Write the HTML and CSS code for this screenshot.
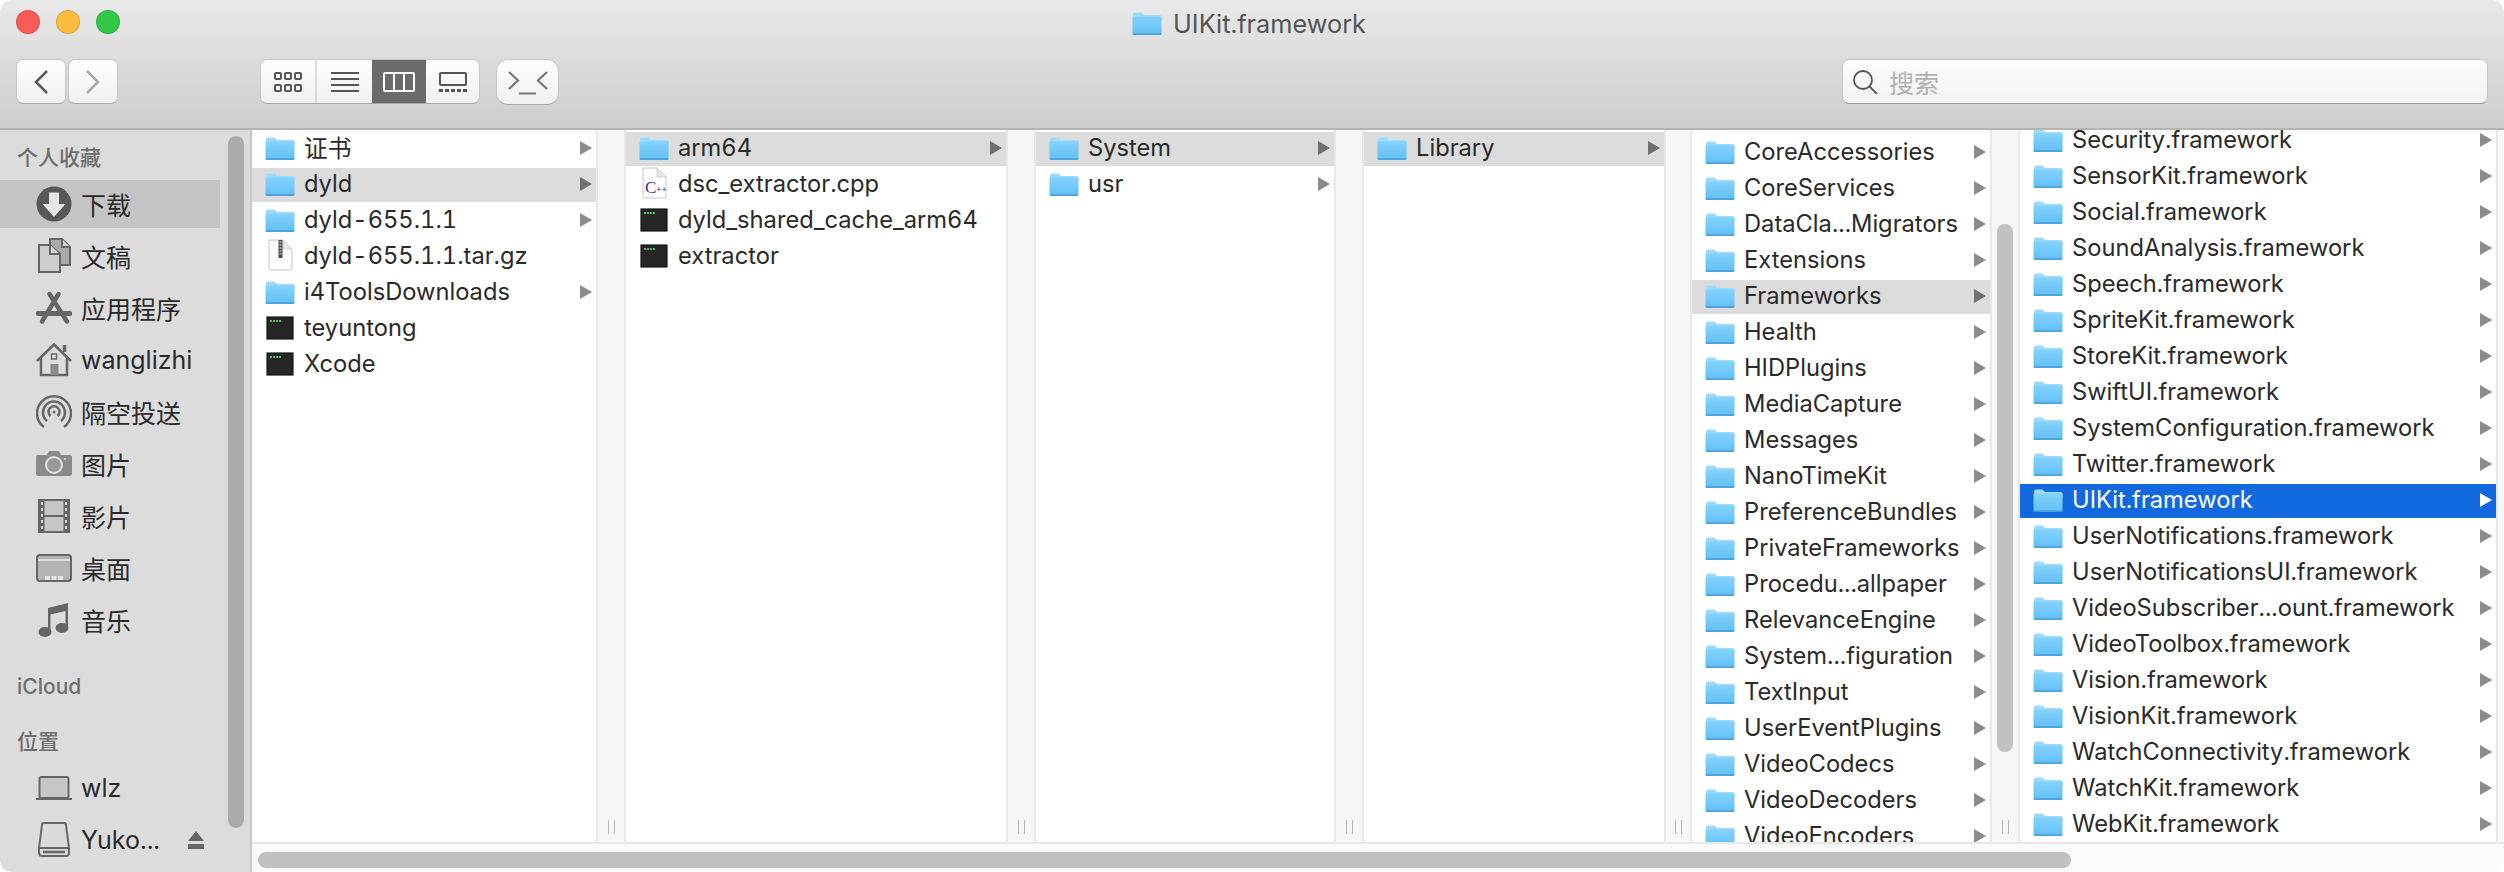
FILE: index.html
```html
<!DOCTYPE html>
<html lang="zh">
<head>
    <meta charset="UTF-8">
    <title>UIKit.framework</title>
    <link rel="stylesheet" href="styles.css">
</head>
<body>
    <svg class="defs" width="0" height="0">
        <defs>
            <linearGradient id="folderFill" x1="0" y1="0" x2="0" y2="1">
                <stop offset="0" stop-color="#84d3fc"/>
                <stop offset="1" stop-color="#61bff6"/>
            </linearGradient>
            <symbol id="folder" viewBox="0 0 30 24">
                <path d="M1 3.5a2 2 0 0 1 2-2h6.5l2.5 2.5h15.500a2 2 0 0 1 2 2V10H1z" fill="#9adbfc"/>
                <path d="M0.500 6.500a1 1 0 0 1 1-1H28.500a1 1 0 0 1 1 1V22a1.500 1.500 0 0 1-1.500 1.500H2A1.500 1.500 0 0 1 0.500 22z" fill="url(#folderFill)"/>
                <path d="M0.500 22.200h29V22.500a1.500 1.500 0 0 1-1.500 1.500H2a1.500 1.500 0 0 1-1.500-1.500z" fill="#4aa3d6"/>
            </symbol>
            <symbol id="exec" viewBox="0 0 30 26">
                <rect x="1" y="1" width="28" height="24" rx="1" fill="#d7e6ef"/>
                <rect x="2" y="2" width="26" height="22" fill="#262626" stroke="#0d0d0d"/>
                <rect x="5" y="5" width="2" height="2" fill="#4fc04f"/>
                <rect x="8" y="5" width="2" height="2" fill="#4fc04f"/>
                <rect x="11" y="5" width="2" height="2" fill="#4fc04f"/>
                <rect x="14" y="5" width="2" height="2" fill="#4fc04f"/>
            </symbol>
            <symbol id="zipdoc" viewBox="0 0 30 34">
                <path d="M4 1H18L27 10V30a1 1 0 0 1-1 1H5a1 1 0 0 1-1-1z" fill="#fdfdfd" stroke="#c4c4c4"/>
                <path d="M18 1V10H27z" fill="#e8e8e8" stroke="#d0d0d0"/>
                <rect x="13.500" y="1" width="4" height="18" fill="#4a4a4a"/>
                <path d="M14.500 3h2M14.500 6h2M14.500 9h2M14.500 12h2M14.500 15h2" stroke="#eee"/>
            </symbol>
            <symbol id="cppdoc" viewBox="0 0 30 34">
                <path d="M4 1H18L27 10V30a1 1 0 0 1-1 1H5a1 1 0 0 1-1-1z" fill="#fdfdfd" stroke="#c4c4c4"/>
                <path d="M18 1V10H27z" fill="#e8e8e8" stroke="#d0d0d0"/>
            </symbol>
        </defs>
    </svg>

    <div class="window">
        <header class="toolbar">
            <div class="titlebar">
                <div class="lights">
                    <span class="light red"></span>
                    <span class="light yellow"></span>
                    <span class="light green"></span>
                </div>
                <div class="title">
                    <svg class="row-icon"><use href="#folder"/></svg>
                    <span>UIKit.framework</span>
                </div>
            </div>
            <div class="tools">
                <div class="nav">
                    <div class="btn nav-btn">
                        <svg width="14" height="24" viewBox="0 0 14 24"><path d="M13 1L2 12L13 23" fill="none" stroke="#5a5a5a" stroke-width="2.500"/></svg>
                    </div>
                    <div class="btn nav-btn">
                        <svg width="14" height="24" viewBox="0 0 14 24"><path d="M1 1L12 12L1 23" fill="none" stroke="#aaaaaa" stroke-width="2.500"/></svg>
                    </div>
                </div>
                <div class="btn views">
                    <div class="view view-first">
                        <svg width="28" height="20" viewBox="0 0 28 20" fill="none" stroke="#555" stroke-width="2">
                            <rect x="1" y="1" width="6" height="6" rx="1"/><rect x="11" y="1" width="6" height="6" rx="1"/><rect x="21" y="1" width="6" height="6" rx="1"/>
                            <rect x="1" y="13" width="6" height="6" rx="1"/><rect x="11" y="13" width="6" height="6" rx="1"/><rect x="21" y="13" width="6" height="6" rx="1"/>
                        </svg>
                    </div>
                    <div class="view view-list">
                        <svg width="28" height="20" viewBox="0 0 28 20" stroke="#555" stroke-width="2">
                            <path d="M0 1H28M0 7H28M0 13H28M0 19H28"/>
                        </svg>
                    </div>
                    <div class="view view-active">
                        <svg width="32" height="20" viewBox="0 0 32 20" fill="none" stroke="#fff" stroke-width="2">
                            <rect x="1" y="1" width="30" height="18" rx="1"/><path d="M11 1V19M21 1V19"/>
                        </svg>
                    </div>
                    <div class="view view-last">
                        <svg width="28" height="20" viewBox="0 0 28 20" fill="none" stroke="#555" stroke-width="2">
                            <rect x="1" y="1" width="26" height="12" rx="1"/>
                            <path d="M0 18.500H4M6 18.500H10M12 18.500H16M18 18.500H22M24 18.500H28" stroke-width="3"/>
                        </svg>
                    </div>
                </div>
                <div class="btn action">
                    <svg width="40" height="24" viewBox="0 0 40 24" fill="none" stroke="#777" stroke-width="2.200">
                        <path d="M1 1L10 9.500L1 18M39 1L30 9.500L39 18"/>
                        <path d="M11 22.500H28" stroke-width="2"/>
                    </svg>
                </div>
                <div class="search">
                    <svg width="25" height="24" viewBox="0 0 25 24" fill="none" stroke="#555" stroke-width="1.800">
                        <circle cx="10" cy="10" r="9"/><path d="M16.500 16.500L24 24"/>
                    </svg>
                    <span>搜索</span>
                </div>
            </div>
        </header>

        <div class="main">
            <aside class="sidebar">
                <div class="side-head head-top">个人收藏</div>
                <div class="side-item side-selected">
                    <svg class="side-icon" viewBox="0 0 36 36">
                        <circle cx="18" cy="18" r="17.500" fill="#585858"/>
                        <path d="M18 31L6.500 18H13V6.500H23V18H29.500z" fill="#e6e6e6"/>
                    </svg>
                    <span>下载</span>
                </div>
                <div class="side-item">
                    <svg class="side-icon" viewBox="0 0 36 36" stroke="#666" stroke-width="2">
                        <path d="M14 1H26L34 9V27H14z" fill="#a9a9a9"/>
                        <path d="M26 1V9H34" fill="#cfcfcf"/>
                        <path d="M3 7H14L24 16V34H3z" fill="#cdcdcd"/>
                        <path d="M14 7V16H24" fill="#dcdcdc"/>
                    </svg>
                    <span>文稿</span>
                </div>
                <div class="side-item">
                    <svg class="side-icon" viewBox="0 0 36 36" fill="none" stroke="#666" stroke-linecap="round">
                        <path d="M13.500 4L31 31.500M22.500 4L6 31.500" stroke-width="4.500"/>
                        <path d="M2 23.500H34" stroke-width="5"/>
                    </svg>
                    <span>应用程序</span>
                </div>
                <div class="side-item">
                    <svg class="side-icon" viewBox="0 0 36 36" fill="none" stroke="#666" stroke-width="2.500">
                        <path d="M1 19L18 2.500L35 19"/>
                        <path d="M5 15V33H31V15"/>
                        <path d="M28.500 10V3" stroke-width="3.500"/>
                        <rect x="15.500" y="12" width="5" height="5" stroke-width="1.500"/>
                        <rect x="14.500" y="22" width="8" height="11" fill="#8a8a8a" stroke="none"/>
                    </svg>
                    <span>wanglizhi</span>
                </div>
                <div class="side-item">
                    <svg class="side-icon" viewBox="0 0 36 36" fill="none" stroke="#666" stroke-width="2.500">
                        <path d="M8 33A17 17 0 1 1 28 33"/>
                        <path d="M11 27A11 11 0 1 1 25 27"/>
                        <path d="M14.500 22A5.500 5.500 0 1 1 21.500 22"/>
                        <circle cx="18" cy="18" r="1.500" fill="#666" stroke="none"/>
                    </svg>
                    <span>隔空投送</span>
                </div>
                <div class="side-item">
                    <svg class="side-icon" viewBox="0 0 36 36">
                        <path d="M2 9H11L13 5H23L25 9H34a2 2 0 0 1 2 2V28a2 2 0 0 1-2 2H2a2 2 0 0 1-2-2V11a2 2 0 0 1 2-2z" fill="#8a8a8a"/>
                        <circle cx="18" cy="19" r="8" fill="#999" stroke="#e2e2e2" stroke-width="2"/>
                        <circle cx="29" cy="13" r="1" fill="#ddd"/>
                    </svg>
                    <span>图片</span>
                </div>
                <div class="side-item">
                    <svg class="side-icon" viewBox="0 0 36 36">
                        <rect x="3" y="2" width="30" height="32" fill="#c6c6c6" stroke="#666" stroke-width="2"/>
                        <path d="M6 2V34M30 2V34" stroke="#666" stroke-width="5"/>
                        <path d="M6 4V34M30 4V34" stroke="#ddd" stroke-width="2" stroke-dasharray="3 3"/>
                        <path d="M8 18H28" stroke="#666" stroke-width="2"/>
                    </svg>
                    <span>影片</span>
                </div>
                <div class="side-item">
                    <svg class="side-icon" viewBox="0 0 36 36">
                        <rect x="1" y="5" width="34" height="26" rx="3" fill="#b4b4b4" stroke="#666" stroke-width="2"/>
                        <path d="M2 10H34" stroke="#ddd" stroke-width="2"/>
                        <rect x="9" y="26" width="5" height="4" fill="#e2e2e2"/>
                        <rect x="15.500" y="26" width="5" height="4" fill="#e2e2e2"/>
                        <rect x="22" y="26" width="5" height="4" fill="#e2e2e2"/>
                    </svg>
                    <span>桌面</span>
                </div>
                <div class="side-item">
                    <svg class="side-icon" viewBox="0 0 36 36" fill="#666">
                        <ellipse cx="9" cy="30" rx="6.500" ry="5"/>
                        <ellipse cx="26" cy="26" rx="6.500" ry="5"/>
                        <path d="M12 30V6L32 1V26H29.500V9L14.500 12.500V30z"/>
                    </svg>
                    <span>音乐</span>
                </div>
                <div class="side-head head-icloud">iCloud</div>
                <div class="side-head head-places">位置</div>
                <div class="side-item">
                    <svg class="side-icon" viewBox="0 0 36 36">
                        <rect x="3.500" y="7" width="29" height="21" rx="1.500" fill="#c6c6c6" stroke="#666" stroke-width="2"/>
                        <path d="M0 29H36" stroke="#666" stroke-width="2"/>
                    </svg>
                    <span>wlz</span>
                </div>
                <div class="side-item">
                    <svg class="side-icon" viewBox="0 0 36 36" fill="none" stroke="#666" stroke-width="2">
                        <path d="M6 3a2 2 0 0 1 2-2H28a2 2 0 0 1 2 2L33 26V31a3 3 0 0 1-3 3H6a3 3 0 0 1-3-3V26z" fill="#dadada"/>
                        <path d="M3 26H33"/>
                        <path d="M7 30H29" stroke-width="2.500"/>
                    </svg>
                    <span class="side-name">Yuko...</span>
                    <svg class="eject" viewBox="0 0 16 18" fill="#666"><path d="M8 0L16 10H0z"/><rect y="13" width="16" height="5"/></svg>
                </div>
                <div class="side-thumb"></div>
            </aside>

            <div class="browser">
                <div class="columns">
                    <div class="col col-1">
                        <div class="row"><svg class="row-icon"><use href="#folder"/></svg><span class="name">证书</span><i class="arrow"></i></div>
                        <div class="row active"><svg class="row-icon"><use href="#folder"/></svg><span class="name">dyld</span><i class="arrow"></i></div>
                        <div class="row"><svg class="row-icon"><use href="#folder"/></svg><span class="name">dyld-655.1.1</span><i class="arrow"></i></div>
                        <div class="row"><svg class="row-icon doc-icon"><use href="#zipdoc"/></svg><span class="name">dyld-655.1.1.tar.gz</span></div>
                        <div class="row"><svg class="row-icon"><use href="#folder"/></svg><span class="name">i4ToolsDownloads</span><i class="arrow"></i></div>
                        <div class="row"><svg class="row-icon exec-icon"><use href="#exec"/></svg><span class="name">teyuntong</span></div>
                        <div class="row"><svg class="row-icon exec-icon"><use href="#exec"/></svg><span class="name">Xcode</span></div>
                    </div>
                    <div class="gutter"><span class="grip"></span></div>
                    <div class="col col-2">
                        <div class="row active"><svg class="row-icon"><use href="#folder"/></svg><span class="name">arm64</span><i class="arrow"></i></div>
                        <div class="row">
                            <svg class="row-icon doc-icon" viewBox="0 0 30 34">
                                <use href="#cppdoc"/>
                                <text class="cpp" x="6" y="26">C<tspan class="cpp-plus" dy="-1">++</tspan></text>
                            </svg>
                            <span class="name">dsc_extractor.cpp</span>
                        </div>
                        <div class="row"><svg class="row-icon exec-icon"><use href="#exec"/></svg><span class="name">dyld_shared_cache_arm64</span></div>
                        <div class="row"><svg class="row-icon exec-icon"><use href="#exec"/></svg><span class="name">extractor</span></div>
                    </div>
                    <div class="gutter"><span class="grip"></span></div>
                    <div class="col col-3">
                        <div class="row active"><svg class="row-icon"><use href="#folder"/></svg><span class="name">System</span><i class="arrow"></i></div>
                        <div class="row"><svg class="row-icon"><use href="#folder"/></svg><span class="name">usr</span><i class="arrow"></i></div>
                    </div>
                    <div class="gutter"><span class="grip"></span></div>
                    <div class="col col-4">
                        <div class="row active"><svg class="row-icon"><use href="#folder"/></svg><span class="name">Library</span><i class="arrow"></i></div>
                    </div>
                    <div class="gutter gutter-narrow"><span class="grip"></span></div>
                    <div class="col col-5">
                        <div class="row"><svg class="row-icon"><use href="#folder"/></svg><span class="name">CoreAccessories</span><i class="arrow"></i></div>
                        <div class="row"><svg class="row-icon"><use href="#folder"/></svg><span class="name">CoreServices</span><i class="arrow"></i></div>
                        <div class="row"><svg class="row-icon"><use href="#folder"/></svg><span class="name">DataCla...Migrators</span><i class="arrow"></i></div>
                        <div class="row"><svg class="row-icon"><use href="#folder"/></svg><span class="name">Extensions</span><i class="arrow"></i></div>
                        <div class="row active"><svg class="row-icon"><use href="#folder"/></svg><span class="name">Frameworks</span><i class="arrow"></i></div>
                        <div class="row"><svg class="row-icon"><use href="#folder"/></svg><span class="name">Health</span><i class="arrow"></i></div>
                        <div class="row"><svg class="row-icon"><use href="#folder"/></svg><span class="name">HIDPlugins</span><i class="arrow"></i></div>
                        <div class="row"><svg class="row-icon"><use href="#folder"/></svg><span class="name">MediaCapture</span><i class="arrow"></i></div>
                        <div class="row"><svg class="row-icon"><use href="#folder"/></svg><span class="name">Messages</span><i class="arrow"></i></div>
                        <div class="row"><svg class="row-icon"><use href="#folder"/></svg><span class="name">NanoTimeKit</span><i class="arrow"></i></div>
                        <div class="row"><svg class="row-icon"><use href="#folder"/></svg><span class="name">PreferenceBundles</span><i class="arrow"></i></div>
                        <div class="row"><svg class="row-icon"><use href="#folder"/></svg><span class="name">PrivateFrameworks</span><i class="arrow"></i></div>
                        <div class="row"><svg class="row-icon"><use href="#folder"/></svg><span class="name">Procedu...allpaper</span><i class="arrow"></i></div>
                        <div class="row"><svg class="row-icon"><use href="#folder"/></svg><span class="name">RelevanceEngine</span><i class="arrow"></i></div>
                        <div class="row"><svg class="row-icon"><use href="#folder"/></svg><span class="name">System...figuration</span><i class="arrow"></i></div>
                        <div class="row"><svg class="row-icon"><use href="#folder"/></svg><span class="name">TextInput</span><i class="arrow"></i></div>
                        <div class="row"><svg class="row-icon"><use href="#folder"/></svg><span class="name">UserEventPlugins</span><i class="arrow"></i></div>
                        <div class="row"><svg class="row-icon"><use href="#folder"/></svg><span class="name">VideoCodecs</span><i class="arrow"></i></div>
                        <div class="row"><svg class="row-icon"><use href="#folder"/></svg><span class="name">VideoDecoders</span><i class="arrow"></i></div>
                        <div class="row"><svg class="row-icon"><use href="#folder"/></svg><span class="name">VideoEncoders</span><i class="arrow"></i></div>
                    </div>
                    <div class="gutter"><span class="col-thumb"></span><span class="grip"></span></div>
                    <div class="col col-6">
                        <div class="row"><svg class="row-icon"><use href="#folder"/></svg><span class="name">Security.framework</span><i class="arrow"></i></div>
                        <div class="row"><svg class="row-icon"><use href="#folder"/></svg><span class="name">SensorKit.framework</span><i class="arrow"></i></div>
                        <div class="row"><svg class="row-icon"><use href="#folder"/></svg><span class="name">Social.framework</span><i class="arrow"></i></div>
                        <div class="row"><svg class="row-icon"><use href="#folder"/></svg><span class="name">SoundAnalysis.framework</span><i class="arrow"></i></div>
                        <div class="row"><svg class="row-icon"><use href="#folder"/></svg><span class="name">Speech.framework</span><i class="arrow"></i></div>
                        <div class="row"><svg class="row-icon"><use href="#folder"/></svg><span class="name">SpriteKit.framework</span><i class="arrow"></i></div>
                        <div class="row"><svg class="row-icon"><use href="#folder"/></svg><span class="name">StoreKit.framework</span><i class="arrow"></i></div>
                        <div class="row"><svg class="row-icon"><use href="#folder"/></svg><span class="name">SwiftUI.framework</span><i class="arrow"></i></div>
                        <div class="row"><svg class="row-icon"><use href="#folder"/></svg><span class="name">SystemConfiguration.framework</span><i class="arrow"></i></div>
                        <div class="row"><svg class="row-icon"><use href="#folder"/></svg><span class="name">Twitter.framework</span><i class="arrow"></i></div>
                        <div class="row selected"><svg class="row-icon"><use href="#folder"/></svg><span class="name">UIKit.framework</span><i class="arrow"></i></div>
                        <div class="row"><svg class="row-icon"><use href="#folder"/></svg><span class="name">UserNotifications.framework</span><i class="arrow"></i></div>
                        <div class="row"><svg class="row-icon"><use href="#folder"/></svg><span class="name">UserNotificationsUI.framework</span><i class="arrow"></i></div>
                        <div class="row"><svg class="row-icon"><use href="#folder"/></svg><span class="name">VideoSubscriber...ount.framework</span><i class="arrow"></i></div>
                        <div class="row"><svg class="row-icon"><use href="#folder"/></svg><span class="name">VideoToolbox.framework</span><i class="arrow"></i></div>
                        <div class="row"><svg class="row-icon"><use href="#folder"/></svg><span class="name">Vision.framework</span><i class="arrow"></i></div>
                        <div class="row"><svg class="row-icon"><use href="#folder"/></svg><span class="name">VisionKit.framework</span><i class="arrow"></i></div>
                        <div class="row"><svg class="row-icon"><use href="#folder"/></svg><span class="name">WatchConnectivity.framework</span><i class="arrow"></i></div>
                        <div class="row"><svg class="row-icon"><use href="#folder"/></svg><span class="name">WatchKit.framework</span><i class="arrow"></i></div>
                        <div class="row"><svg class="row-icon"><use href="#folder"/></svg><span class="name">WebKit.framework</span><i class="arrow"></i></div>
                    </div>
                    <div class="gutter-end"></div>
                </div>
                <div class="hscroll"><div class="hscroll-thumb"></div></div>
            </div>
        </div>
    </div>
</body>
</html>
```

FILE: styles.css
```css
* {
    box-sizing: border-box;
}
html, body {
    margin: 0;
    height: 100%;
    background: #fff;
}
body {
    font-family: Inter, "Noto Sans CJK SC", sans-serif;
    font-variant-numeric: tabular-nums;
    color: #2a2a2a;
    overflow: hidden;
}
.defs {
    display: block;
    height: 0;
}
.window {
    width: 2504px;
    height: 872px;
    display: flex;
    flex-direction: column;
    border-radius: 12px;
    overflow: hidden;
}

/* toolbar */
.toolbar {
    height: 130px;
    flex: none;
    background: linear-gradient(#e9e9e9, #cdcdcd);
    border-bottom: 2px solid #b4b4b4;
}
.titlebar {
    height: 59px;
    display: grid;
    grid-template-columns: 1fr auto 1fr;
    align-items: start;
    padding-right: 6px;
}
.lights {
    display: flex;
    gap: 16px;
    padding: 10px 0 0 16px;
}
.light {
    width: 24px;
    height: 24px;
    border-radius: 50%;
    border: 1px solid rgba(0,0,0,0.12);
}
.red { background: #fc5b57; }
.yellow { background: #fdbc40; }
.green { background: #33c748; }
.title {
    display: flex;
    align-items: center;
    gap: 11px;
    height: 34px;
    margin-top: 6px;
    font-size: 25.300px;
    color: #555;
}
.tools {
    display: flex;
    align-items: flex-start;
    padding-left: 16px;
}
.btn {
    background: linear-gradient(#fefefe, #f1f1f1);
    border: 1px solid #c6c6c6;
    border-bottom-color: #aaa;
    border-radius: 7px;
}
.nav {
    display: flex;
    gap: 2px;
}
.nav-btn {
    width: 50px;
    height: 45px;
    display: flex;
    align-items: center;
    justify-content: center;
}
.views {
    display: flex;
    width: 220px;
    height: 45px;
    margin-left: 142px;
    overflow: hidden;
}
.view {
    display: flex;
    align-items: center;
    justify-content: center;
    height: 100%;
}
.view-first {
    width: 56px;
    border-right: 2px solid #dcdcdc;
}
.view-list {
    width: 55px;
}
.view-active {
    width: 54px;
    background: #6b6b6b;
}
.view-last {
    width: 53px;
}
.action {
    width: 63px;
    height: 46px;
    margin-left: 16px;
    border-radius: 12px;
    display: flex;
    align-items: center;
    justify-content: center;
    padding-top: 2px;
}
.search {
    width: 646px;
    height: 45px;
    margin-left: auto;
    margin-right: 16px;
    display: flex;
    align-items: center;
    gap: 11px;
    padding-left: 10px;
    background: linear-gradient(#fcfcfc, #f2f2f2);
    border: 1px solid #c6c6c6;
    border-bottom-color: #999;
    border-radius: 7px;
    font-size: 25px;
    color: #b0b0b0;
}

.main {
    flex: 1;
    display: flex;
    min-height: 0;
}

/* sidebar */
.sidebar {
    position: relative;
    width: 252px;
    flex: none;
    padding-top: 8px;
    background: #dcdcdc;
    border-right: 2px solid #c8c8c8;
    overflow: hidden;
}
.side-head {
    height: 42px;
    padding-left: 17px;
    display: flex;
    align-items: center;
    font-size: 21px;
    font-weight: 500;
    color: #6f6f6f;
}
.head-top {
    padding-bottom: 6px;
}
.head-icloud {
    margin-top: 20px;
    height: 44px;
}
.head-places {
    margin-top: 10px;
    height: 46px;
    padding-bottom: 2px;
}
.side-item {
    width: 220px;
    height: 48px;
    margin-bottom: 4px;
    padding-left: 36px;
    display: flex;
    align-items: center;
    gap: 9px;
    font-size: 25px;
}
.side-selected {
    background: #c4c4c4;
}
.side-icon {
    width: 36px;
    height: 36px;
    flex: none;
}
.side-name {
    flex: 1;
}
.eject {
    width: 16px;
    height: 18px;
    margin-right: 16px;
}
.side-thumb {
    position: absolute;
    top: 6px;
    left: 228px;
    width: 16px;
    height: 692px;
    border-radius: 8px;
    background: #ababab;
}

/* columns */
.browser {
    flex: 1;
    min-width: 0;
    display: flex;
    flex-direction: column;
}
.columns {
    height: 712px;
    display: flex;
    overflow: hidden;
}
.col {
    flex: none;
    display: flex;
    flex-direction: column;
    gap: 2px;
    padding-top: 2px;
    overflow: hidden;
}
.col-1 { width: 344px; }
.col-2 { width: 380px; }
.col-3 { width: 298px; }
.col-4 { width: 300px; }
.col-5 { width: 298px; padding-top: 6px; }
.col-6 { width: 476px; padding-top: 0; }
.col-6 .row:first-child { margin-top: -6px; }
.row {
    flex: none;
    height: 34px;
    display: flex;
    align-items: center;
    padding: 0 4px 2px 13px;
    font-size: 23.700px;
    white-space: nowrap;
}
.row-icon {
    width: 30px;
    height: 24px;
    flex: none;
}
.exec-icon {
    height: 26px;
}
.doc-icon {
    height: 34px;
}
.name {
    flex: 1;
    margin-left: 9px;
    padding-bottom: 2px;
}
.arrow {
    width: 0;
    height: 0;
    flex: none;
    border-left: 12px solid #8c8c8c;
    border-top: 7px solid transparent;
    border-bottom: 7px solid transparent;
}
.active {
    background: #dcdcdc;
}
.active .arrow {
    border-left-color: #707070;
}
.selected {
    background: #1268de;
    color: #fff;
}
.selected .arrow {
    border-left-color: #fff;
}
.cpp {
    font-family: "Liberation Serif", serif;
    font-size: 17px;
    fill: #4b2a8f;
}
.cpp-plus {
    font-size: 9px;
    font-weight: 700;
}
.gutter {
    width: 30px;
    flex: none;
    display: flex;
    flex-direction: column;
    align-items: center;
    background: #f7f7f7;
    border-left: 2px solid #e8e8e8;
    border-right: 2px solid #e8e8e8;
}
.gutter-narrow {
    width: 28px;
}
.gutter-end {
    flex: 1;
    background: #f7f7f7;
    border-left: 2px solid #e8e8e8;
}
.col-thumb {
    width: 16px;
    height: 528px;
    margin-top: 94px;
    border-radius: 8px;
    background: #c1c1c1;
}
.grip {
    width: 7px;
    height: 14px;
    margin-top: auto;
    margin-bottom: 8px;
    border-left: 1px solid #b5b5b5;
    border-right: 1px solid #b5b5b5;
}
.hscroll {
    flex: 1;
    padding: 8px 0 0 6px;
    background: #fafafa;
    border-top: 2px solid #e8e8e8;
}
.hscroll-thumb {
    width: 1813px;
    height: 16px;
    border-radius: 8px;
    background: #c1c1c1;
}
```
